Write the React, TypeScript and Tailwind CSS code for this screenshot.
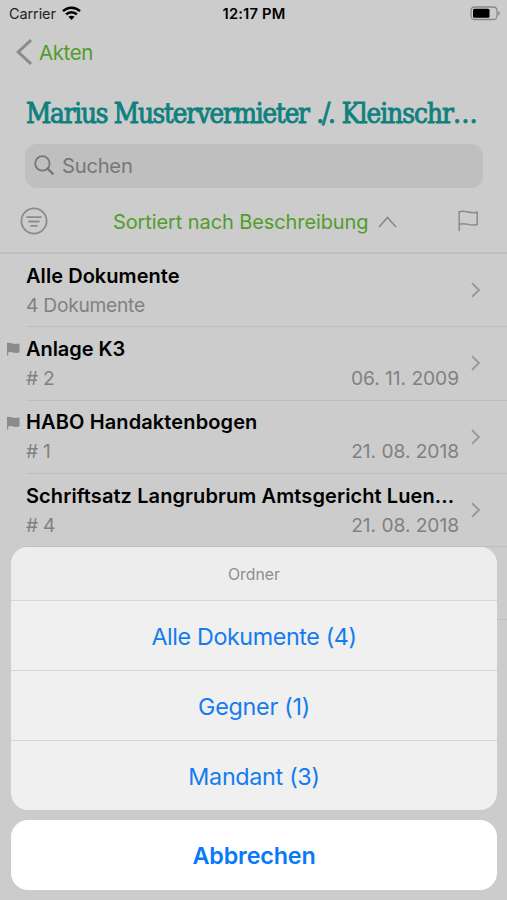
type Doc = { title: string; sub: string; date?: string; flagged?: boolean; spacing: string };

const docs: Doc[] = [
  { title: 'Alle Dokumente', sub: '4 Dokumente', spacing: 'tracking-[0.05px]' },
  { title: 'Anlage K3', sub: '# 2', date: '06. 11. 2009', flagged: true, spacing: 'tracking-[-0.05px]' },
  { title: 'HABO Handaktenbogen', sub: '# 1', date: '21. 08. 2018', flagged: true, spacing: 'tracking-[0.12px]' },
  { title: 'Schriftsatz Langrubrum Amtsgericht Luen...', sub: '# 4', date: '21. 08. 2018', spacing: 'tracking-[0.09px]' },
];

const folders = [
  { label: 'Alle Dokumente (4)', spacing: 'tracking-[-0.39px]' },
  { label: 'Gegner (1)', spacing: 'tracking-[-0.25px]' },
  { label: 'Mandant (3)', spacing: 'tracking-[-0.3px]' },
];

function StatusBar() {
  return (
    <div className="grid h-7 grid-cols-3 items-center pl-[9px] pr-[6px]">
      <div className="flex items-center gap-[6px] text-[14.5px] tracking-[-0.1px] text-[#222]">
        <span>Carrier</span>
        <svg className="-mt-[2px]" width="19" height="14" viewBox="0 0 19 14" fill="none" stroke="#000" strokeWidth="2.5">
          <path d="M1 5.2C5.8 0.5 13.2 0.5 18 5.2" />
          <path d="M4.1 8.4C7.1 5.5 11.9 5.5 14.9 8.4" />
          <path d="M9.5 14L6.4 10.8C8.2 9.3 10.8 9.3 12.6 10.8Z" fill="#000" stroke="none" />
        </svg>
      </div>
      <div className="-ml-[2px] text-center text-[14.7px] font-semibold tracking-[0.2px]">12:17 PM</div>
      <svg className="-mt-[2px] justify-self-end" width="31" height="15" viewBox="0 0 31 15">
        <rect x="1" y="1" width="26" height="12.5" rx="3.5" fill="none" stroke="#888" strokeWidth="1.3" />
        <rect x="3" y="2.8" width="16.5" height="9" rx="1.5" fill="#000" />
        <path d="M28.4 5V9.6C30.4 8.8 30.4 5.8 28.4 5Z" fill="#888" />
      </svg>
    </div>
  );
}

function Chevron() {
  return (
    <svg width="10" height="16" viewBox="0 0 10 16" fill="none" stroke="#999" strokeWidth="1.9">
      <path d="M1 1.2L8 8L1 14.8" />
    </svg>
  );
}

function Row({ doc }: { doc: Doc }) {
  return (
    <div className="flex h-[73.3px] pl-[6px]">
      <div className="w-5 pt-[15px]">
        {doc.flagged && (
          <svg width="14" height="14" viewBox="0 0 14 14" fill="#8b8b8b">
            <path d="M1 1C4 0 7 3 13.5 1.5V10.5C8 12 6 9 2.2 10.5V13.5H1Z" />
          </svg>
        )}
      </div>
      <div className="flex flex-1 items-center border-b border-[#bebebe] pr-[26px]">
        <div className="flex-1 pt-px">
          <div className={`h-[29px] whitespace-nowrap text-[20px] font-semibold leading-[29px] text-black ${doc.spacing}`}>{doc.title}</div>
          <div className="flex h-[29px] justify-between pr-[12px] text-[19.2px] leading-[29px] tracking-[-0.05px] text-[#818181]">
            <span className="tracking-[-0.25px]">{doc.sub}</span>
            <span>{doc.date}</span>
          </div>
        </div>
        <Chevron />
      </div>
    </div>
  );
}

export default function App() {
  return (
    <div className="relative h-[900px] w-[507px] overflow-hidden bg-[#cccccc] font-['Inter',sans-serif]">
      <StatusBar />
      <div className="flex h-12 items-center gap-[6px] pl-[16px] text-[20.5px] tracking-[-0.4px] text-[#519c2b]">
        <svg width="17" height="26" viewBox="0 0 17 26" fill="none" stroke="#8b8b8b" strokeWidth="3">
          <path d="M15 1.2L2.2 13L15 24.8" />
        </svg>
        <span className="pt-[2px]">Akten</span>
      </div>
      <h1 className="h-[68px] whitespace-nowrap pl-[26px] font-['DejaVu_Serif_Condensed','DejaVu_Serif',serif] text-[27.5px] leading-[74px] tracking-[-1.22px] text-[#0e817f] [-webkit-text-stroke:0.9px_#0e817f]">
        Marius Mustervermieter <span className="ml-px tracking-[-2.3px]">./</span><span className="tracking-[-0.9px]">. Kleinschr…</span>
      </h1>
      <div className="ml-[25px] flex h-[44px] w-[458px] items-center gap-[7px] rounded-[12px] bg-[#bfbfbf] pl-[9px] text-[20.2px] tracking-[-0.25px] text-[#777]">
        <svg className="-mt-[2px]" width="21" height="21" viewBox="0 0 21 21" fill="none" stroke="#777" strokeWidth="1.8">
          <circle cx="8.4" cy="8.4" r="7.2" />
          <path d="M13.6 13.6L19.5 19.5" strokeWidth="2.3" />
        </svg>
        <span>Suchen</span>
      </div>
      <div className="flex h-[66px] items-center border-b-2 border-[#bebebe] pl-5 pt-[2px]">
        <svg width="28" height="28" viewBox="0 0 28 28" fill="none" stroke="#8b8b8b" strokeWidth="1.8">
          <circle cx="14" cy="14" r="12.6" />
          <path d="M6.3 10.2H21.7M8.4 14.5H19.6M10.5 18.8H17.5" />
        </svg>
        <span className="ml-[65px] w-[256px] whitespace-nowrap pt-px text-[20px] tracking-[-0.1px] text-[#519c2b]">Sortiert nach Beschreibung</span>
        <svg className="ml-[9px] mt-[2px]" width="19" height="12" viewBox="0 0 19 12" fill="none" stroke="#8b8b8b" strokeWidth="1.7">
          <path d="M1 11L9.5 1.5L18 11" />
        </svg>
        <svg className="-mt-px ml-[61px]" width="21" height="21" viewBox="0 0 21 21" fill="none" stroke="#8b8b8b" strokeWidth="1.5">
          <path d="M1.2 21V1.8C7 -0.7 11 4.4 19.2 2.2V14.5C12 17 8 11.8 1.2 14.3" />
        </svg>
      </div>
      {docs.map((doc) => (
        <Row key={doc.title} doc={doc} />
      ))}
      <div className="ml-[26px] h-[73.3px] border-b border-[#bebebe]" />

      <div className="absolute bottom-[10px] left-[11px] right-[10px] text-center text-[#147cf0]">
        <div className="overflow-hidden rounded-[17px] bg-[#eff0ef]">
          <div className="h-[53.4px] bg-[#ecedec] text-[15.8px] leading-[56px] text-[#8e8e8e]">Ordner</div>
          {folders.map((folder) => (
            <div key={folder.label} className={`h-[70px] border-t border-[#d6d7d6] text-[23.3px] leading-[71px] ${folder.spacing}`}>{folder.label}</div>
          ))}
        </div>
        <div className="mt-[10.3px] h-[69.7px] rounded-[17px] bg-white text-[23.3px] font-semibold leading-[72px] tracking-[-0.15px] text-[#087af8]">Abbrechen</div>
      </div>
    </div>
  );
}
